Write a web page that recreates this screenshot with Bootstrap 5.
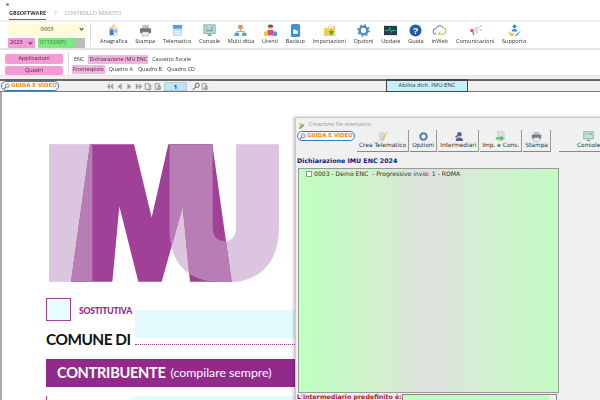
<!DOCTYPE html>
<html lang="it">
<head>
<meta charset="utf-8">
<title>GBsoftware</title>
<link href="https://cdn.jsdelivr.net/npm/bootstrap@5.3.0/dist/css/bootstrap.min.css" rel="stylesheet">
<style>
html,body{width:600px;height:400px;overflow:hidden;margin:0}
body{font-family:"Open Sans","Noto Sans",sans-serif;font-size:6.5px;line-height:1;color:#333;background:#fff}
.shell{height:400px;filter:blur(.3px)}
.titlebar{height:8px;padding-left:6px}
.titledot{width:3px;height:3px;background:#888;border-radius:50%}
.tabbar{height:14px;padding-left:9px;gap:8px;border-bottom:2px solid #f0f0f0;font-size:5.5px;color:#aaa}
.tabbar span{height:12px;display:flex;align-items:center}
.tab-on{color:#333;font-weight:700;border-bottom:1px solid #3a6ea5}
.ribbon{height:28px;border-bottom:2px solid #e4e4e4}
.selbox{width:90px;padding:2px 0 0 8px;gap:2px;flex:none}
.selpair{gap:3px}
.pick{display:flex;align-items:center;justify-content:center;height:12px;border-radius:1px;position:relative;font-size:5.6px}
.pick::after{content:"";position:absolute;right:3px;top:3px;width:3px;height:3px;border-right:1px solid #333;border-bottom:1px solid #333;transform:rotate(45deg)}
.pick-y{width:78px;background:#fdfbd8}
.pick-p{width:27px;background:#f39bd6;height:10px;justify-content:flex-start;padding-left:2px}
.pick-g{width:47px;background:#7fe87f;height:10px;color:#4a7a4a;justify-content:flex-start;padding-left:2px}
.pick-g::after{right:0;top:0;width:9px;height:10px;border:0;background:#bbb;transform:none}
.ribdiv{width:1px;height:24px;background:#ddd;margin:1px 0 0 0;flex:none}
.ribarea{flex:1;height:26px;padding:2px 0 0 9px;gap:7.7px}
.ribitem{display:flex;flex-direction:column;align-items:center;gap:2px;white-space:nowrap;font-size:5.6px}
.ribitem svg{width:13px;height:13px;display:block;opacity:.9}
.ribitem svg.wide-ic{width:17px}
.menurow{height:26px;border-bottom:1px solid #e6e6e6;padding-top:2px}
.menuleft{width:68px;padding:2px 5px 0 5px;gap:2px;flex:none}
.pinkbtn{background:#f39bd6;border:0;border-radius:2px;height:9.5px;font-size:5.6px;line-height:9px;padding:0;color:#333;width:58px}
.menuright{flex:1;border-left:1px solid #ddd;padding:3px 0 0 3px;gap:1px}
.menuline{gap:3px;height:9px;align-items:center}
.menuline span{padding:0 1px;height:9px;line-height:9px;font-size:5.4px}
.menuline .hot{background:#f7b1e0}
.menuindent{padding-left:1px}
.gapbar{height:3px;background:#eee}
.doctools{height:13px;background:#f0f0f0;border-top:2px solid #666;border-bottom:1px solid #777}
.guide{display:flex;align-items:center;gap:1px;border:1px solid #2d7fc1;border-radius:6px;background:#fff;color:#ee8a13;font-family:"DejaVu Sans",sans-serif;font-weight:700;font-size:5.4px;height:10px;width:58px;padding-left:1px;white-space:nowrap;flex:none}
.guide svg{width:7px;height:7px;flex:none}
.doctools .guide{margin:0 0 0 1px}
.navset{margin-left:47px;width:280px;height:10px;gap:1.500px;flex:none}
.navset svg{width:8px;height:9px;display:block}
.pagebox{width:23px;height:9px;background:#bfe3f7;color:#113a9c;border:1px solid #bcd;font-size:6px;font-weight:700;text-align:center;line-height:8px;margin:0 3px 0 1px}
.enablebtn{margin-top:-2px;width:82px;height:13px;background:#c8f0fc;border:1px solid #444;border-top-width:2px;font-size:5.8px;line-height:9px;text-align:center;color:#333;flex:none}
.stage{position:relative;flex:1;border-left:2px solid #aaa;background:#fff;overflow:hidden}
.sheet{width:293px;padding-left:44px}
.logo{display:block;width:230px;height:138px;margin:52px 0 16px 3px}
.headrow{height:61px}
.headleft{width:89px;flex:none}
.tick{width:25px;height:23px;border:1px solid #a3449b;background:#e6fdfd;flex:none}
.subst{color:#922a8c;font-family:Lato,sans-serif;font-weight:900;font-size:8.6px;margin:9px 0 0 8px;letter-spacing:-.2px;white-space:nowrap}
.comune{font-family:Lato,sans-serif;font-weight:700;font-size:15.4px;color:#111;margin-top:11px;white-space:nowrap;letter-spacing:-.5px}
.headright{flex:1;padding-top:12px}
.fieldbg{height:28px;background:#e4fbfc;margin-bottom:6px}
.fielddots{border-bottom:1px dotted #9a3b95}
.sectbar{height:28px;background:#922a8c;color:#fff;padding-left:11px;font-family:Lato,sans-serif;white-space:nowrap}
.sectbar b{font-size:14.6px;font-weight:700;letter-spacing:-.3px}
.sectbar em{font-style:normal;font-size:12.3px;margin-left:5px}
.sectbody{height:20px;border-left:1px solid #a3449b}
.sectfill{height:8px;margin:9px 0 0 85px;background:#e4fbfc}
.telewin{position:absolute;left:293px;top:25px;width:310px;height:290px;background:#f0f0f0;border:1px solid #ccc;box-shadow:-1px 0 3px rgba(0,0,0,.3);font-family:"DejaVu Sans",sans-serif}
.wintitle{height:12px;padding:2px 0 0 2px;gap:4px;color:#999;font-family:"Open Sans",sans-serif;font-size:5.4px}
.wintitle svg{width:7px;height:7px}
.wintools{height:22px;padding-left:1px;gap:1px}
.telewin .guide{margin:1px 1px 0 0}
.wtool{height:22px;padding:0 2px 2px;border:0;border-right:1px solid #999;border-bottom:1px solid #888;display:flex;flex-direction:column;align-items:center;justify-content:flex-end;gap:1px;font-size:5.9px;white-space:nowrap;color:#333;background:#f0f0f0;border-radius:0}
.wtool svg{width:11px;height:11px;opacity:.85}
.wtool-far{margin-left:7px;padding:0 18px 2px;border-right:0}
.dichead{color:#14147a;font-weight:700;font-size:6.3px;padding:6px 0 0 1px;height:16px}
.greenlist{margin-left:2px;width:261px;height:225px;border:1px solid #9a9a9a;padding:0 0 0 7px;background:linear-gradient(90deg,#bfffbf 0%,#d2efcf 32%,#e0e0e0 50%,#d6ecd4 66%,#c4fbc4 100%);font-size:6.1px;color:#333}
.chk{width:6px;height:6px;border:1px solid #999;background:#fff;margin-right:2px;flex:none}
.greenrow{height:8px;margin-top:1px}
.intbar{margin-top:1px;height:10px;padding-left:1px}
.intlabel{color:#b01818;font-weight:700;font-size:6.3px;width:105px;white-space:nowrap;flex:none}
.intsel{width:155px;height:10px;background:#bfffbf;border:1px solid #888;position:relative}
.intsel::after{content:"";position:absolute;right:0;top:0;width:7px;height:9px;background:#eee}
</style>
</head>
<body>
<svg width="0" height="0" class="position-absolute">
<defs>
<symbol id="ic-mag" viewBox="0 0 10 10"><circle cx="6" cy="4" r="3" fill="#cfe7f7" stroke="#5a7fa8"/><path d="M4 6 1 9" stroke="#d94a3a" stroke-width="1.6"/></symbol>
<symbol id="ic-print" viewBox="0 0 14 14"><rect x="3.5" y="1" width="7" height="4" fill="#b5bcc2"/><rect x="1" y="4.5" width="12" height="5.5" rx="1" fill="#5c6870"/><rect x="3.5" y="8.5" width="7" height="4.5" fill="#e8edf0" stroke="#7d8890" stroke-width=".5"/></symbol>
</defs>
</svg>
<div class="shell d-flex flex-column">
  <div class="titlebar d-flex align-items-center"><span class="titledot"></span></div>
  <div class="tabbar d-flex"><span class="tab-on">GBSOFTWARE</span><span>?</span><span>CONTROLLO REMOTO</span></div>

  <div class="ribbon d-flex">
    <div class="selbox d-flex flex-column">
      <div class="pick pick-y">0003</div>
      <div class="selpair d-flex"><div class="pick pick-p">2023</div><div class="pick pick-g">011329(P)</div></div>
    </div>
    <div class="ribdiv"></div>
    <div class="ribarea d-flex">
      <div class="ribitem"><svg viewBox="0 0 14 14"><rect x="2" y="3" width="10" height="10" fill="#dce9f7"/><path d="M7 0l2 3H5z" fill="#f0b83a"/><rect x="3" y="6" width="4" height="6" fill="#2a6fc0"/><circle cx="5" cy="5.500" r="1.500" fill="#e0843a"/><rect x="8" y="6" width="3" height="1" fill="#3f86d0"/><rect x="8" y="8" width="3" height="1" fill="#e04a4a"/></svg>Anagrafica</div>
      <div class="ribitem"><svg><use href="#ic-print"/></svg>Stampa</div>
      <div class="ribitem"><svg viewBox="0 0 14 14"><path d="M2 1h8l2 2v10H2z" fill="#bcdcf5"/><rect x="2" y="1" width="10" height="4" fill="#3f98e0"/><path d="M4 8h6M4 10h6" stroke="#fff"/></svg>Telematico</div>
      <div class="ribitem"><svg viewBox="0 0 14 14"><rect x="1" y="1" width="12" height="9" fill="#bfe0dc" stroke="#5a9aa0"/><rect x="3" y="3" width="3" height="2" fill="#e0a04a"/><rect x="8" y="3" width="3" height="2" fill="#5ab36a"/><rect x="3" y="6" width="8" height="2" fill="#5a9fd0"/><path d="M5 12h4" stroke="#5a9aa0" stroke-width="2"/></svg>Console</div>
      <div class="ribitem"><svg viewBox="0 0 14 14"><path d="M7 5v3M3 10V8h8v2" stroke="#7a9ab8" fill="none"/><rect x="4.500" y="1" width="5" height="4.500" rx="1" fill="#ea8a2e"/><rect x="0.500" y="9.500" width="5" height="3.500" rx="1" fill="#3d8fd8"/><rect x="8.500" y="9.500" width="5" height="3.500" rx="1" fill="#4fb36a"/></svg>Multi ditta</div>
      <div class="ribitem"><svg viewBox="0 0 14 14"><circle cx="7" cy="3.500" r="2.500" fill="#f2b28a"/><path d="M7 .5a3 3 0 0 1 3 3H4a3 3 0 0 1 3-3z" fill="#6a3a2a"/><rect x="3.500" y="6.500" width="7" height="6" rx="1" fill="#d9416f"/><rect x="0" y="8" width="4" height="5" rx="1" fill="#f0b83a"/><rect x="10" y="8" width="4" height="5" rx="1" fill="#4a86d8"/></svg>Utenti</div>
      <div class="ribitem"><svg viewBox="0 0 14 14"><rect x="2" y="0" width="10" height="14" rx="2" fill="#2f84c6"/><path d="M4.500 6h2l1 1h2v3.500h-5z" fill="#fff"/></svg>Backup</div>
      <div class="ribitem"><svg viewBox="0 0 14 14"><path d="M1 4h4l1-2h7v11H1z" fill="#f4cb3c"/><rect x="6" y="0" width="5" height="5" fill="#eee"/><path d="M9 5v4M6.500 8 9 12l2.500-4z" fill="#3aa83a" stroke="#3aa83a"/></svg>Importazioni</div>
      <div class="ribitem"><svg viewBox="0 0 14 14"><circle cx="7" cy="7" r="4.200" fill="none" stroke="#3a7dbc" stroke-width="2.600"/><circle cx="7" cy="7" r="6" fill="none" stroke="#3a7dbc" stroke-width="1.600" stroke-dasharray="2 2.700"/></svg>Opzioni</div>
      <div class="ribitem"><svg viewBox="0 0 14 14"><rect y="2" width="14" height="10" fill="#0e2a3a"/><path d="M1 7h4l1-3 2 5 1-2h4" stroke="#35d07a" fill="none" stroke-width=".8"/></svg>Update</div>
      <div class="ribitem"><svg viewBox="0 0 14 14"><circle cx="7" cy="7" r="6.500" fill="#0f4c94"/><text x="7" y="10.500" font-size="10" font-weight="700" text-anchor="middle" fill="#fff" font-family="Liberation Sans">?</text></svg>Guida</div>
      <div class="ribitem"><svg class="wide-ic" viewBox="0 0 14 14"><path d="M3.500 11a3 3 0 0 1-.5-6 4.500 4.500 0 0 1 8-1" fill="none" stroke="#4a8fd0" stroke-width="1.100"/><path d="M11 4a3.600 3.600 0 0 1 0 7H6l2-3" fill="none" stroke="#f0a040" stroke-width="1.100"/></svg>inWeb</div>
      <div class="ribitem"><svg viewBox="0 0 14 14"><path d="M3 6l7-4v9L3 8z" fill="#d8dde0"/><rect x="1.500" y="5.500" width="3" height="3" fill="#d94040"/><path d="M4 8.500 5.500 12" stroke="#d94040" stroke-width="1.300"/><path d="M11 4l2-2M11.500 6.500h2" stroke="#e06a50"/></svg>Comunicazioni</div>
      <div class="ribitem"><svg viewBox="0 0 14 14"><circle cx="7" cy="2.500" r="2" fill="#2f7fd8"/><path d="M4 8a3 3 0 0 1 6 0z" fill="#2f7fd8"/><path d="M0 8l4 2h3l-2 3H3z" fill="#f0b040"/><path d="M14 7l-4 3-3 3h3z" fill="#49b0e8"/></svg>Supporto</div>
    </div>
  </div>

  <div class="menurow d-flex">
    <div class="menuleft d-flex flex-column">
      <button type="button" class="btn pinkbtn">Applicazioni</button>
      <button type="button" class="btn pinkbtn">Quadri</button>
    </div>
    <div class="menuright d-flex flex-column">
      <div class="menuline menuindent d-flex"><span>ENC</span><span class="hot">Dichiarazione IMU ENC</span><span>Cassetto fiscale</span></div>
      <div class="menuline d-flex"><span class="hot">Frontespizio</span><span>Quadro A</span><span>Quadro B</span><span>Quadro CD</span></div>
    </div>
  </div>
  <div class="gapbar"></div>

  <div class="doctools d-flex">
    <div class="guide"><svg><use href="#ic-mag"/></svg>GUIDA E VIDEO</div>
    <div class="navset d-flex align-items-center">
      <svg viewBox="0 0 10 10"><path d="M5 1 1 5l4 4zM9 1 5 5l4 4z" fill="#9aa2a8"/></svg>
      <svg viewBox="0 0 10 10"><path d="M7 1 2 5l5 4z" fill="#9aa2a8"/></svg>
      <svg viewBox="0 0 10 10"><path d="M3 1l5 4-5 4z" fill="#9aa2a8"/></svg>
      <svg viewBox="0 0 10 10"><path d="M1 1l4 4-4 4zM5 1l4 4-4 4z" fill="#9aa2a8"/></svg>
      <svg viewBox="0 0 10 10"><path d="M1.500 1.500h5v7h-5z" fill="#eee" stroke="#888"/><path d="M6.500 3h2v6h-5" fill="none" stroke="#888"/></svg>
      <svg viewBox="0 0 10 10"><path d="M1.500 1.500h5v7h-5z" fill="#eee" stroke="#888"/><circle cx="6.500" cy="6.500" r="2" fill="none" stroke="#777"/></svg>
      <div class="pagebox">1</div>
      <svg viewBox="0 0 10 10"><circle cx="6.500" cy="3.500" r="2.500" fill="#fff" stroke="#333"/><path d="M4.500 5.500 1 9" stroke="#a0702a" stroke-width="1.500"/></svg>
      <svg viewBox="0 0 10 10"><path d="M1.500 1.500h5v7h-5z" fill="#eee" stroke="#888"/><circle cx="6.500" cy="6.500" r="2" fill="none" stroke="#777"/></svg>
    </div>
    <div class="enablebtn">Abilita dich. IMU-ENC</div>
  </div>

  <div class="stage">
    <div class="sheet">
      <svg class="logo" viewBox="57 42 690 413" aria-label="IMU">
        <defs>
          <path id="shape-m" d="M180 42H312L365 262 415 42H547L605 455H480L458 230 395 455H325L268 228 247 455H123Z"/>
          <path id="shape-u" d="M418 42H548V290Q548 333 585 333 618 333 618 290V42H747V290C747 400 690 457 585 457 470 457 418 400 418 290Z"/>
          <clipPath id="clip-i"><rect x="57" y="42" width="130" height="413"/></clipPath>
          <clipPath id="clip-u"><use href="#shape-u"/></clipPath>
        </defs>
        <rect x="57" y="42" width="130" height="413" fill="#dcc5df"/>
        <use href="#shape-u" fill="#dcc5df"/>
        <use href="#shape-m" fill="#a04097"/>
        <use href="#shape-m" fill="#b87db5" clip-path="url(#clip-i)"/>
        <use href="#shape-m" fill="#b87db5" clip-path="url(#clip-u)"/>
      </svg>
      <div class="headrow d-flex">
        <div class="headleft">
          <div class="d-flex"><div class="tick"></div><div class="subst">SOSTITUTIVA</div></div>
          <div class="comune">COMUNE DI</div>
        </div>
        <div class="headright"><div class="fieldbg"></div><div class="fielddots"></div></div>
      </div>
      <div class="sectbar d-flex align-items-center"><b>CONTRIBUENTE</b><em>(compilare sempre)</em></div>
      <div class="sectbody"><div class="sectfill"></div></div>
    </div>

    <div class="telewin">
      <div class="wintitle d-flex align-items-center">
        <svg viewBox="0 0 10 10"><path d="M1 9 7 3l2 2-6 5z" fill="#888"/><path d="M2 2h4v3H2z" fill="#e0c040"/></svg>Creazione file telematico
      </div>
      <div class="wintools d-flex">
        <div class="guide"><svg><use href="#ic-mag"/></svg>GUIDA E VIDEO</div>
        <button type="button" class="wtool"><svg viewBox="0 0 12 12"><rect x="2" y="1" width="6" height="10" fill="#d5d5d5"/><path d="M5 9l5-8 1 1-4 8z" fill="#e8c040"/></svg>Crea Telematico</button>
        <button type="button" class="wtool"><svg viewBox="0 0 12 12"><circle cx="6" cy="6" r="3.500" fill="none" stroke="#2d6cb0" stroke-width="2.200"/></svg>Opzioni</button>
        <button type="button" class="wtool"><svg viewBox="0 0 12 12"><circle cx="7" cy="3.500" r="2.500" fill="#2a4a8a"/><path d="M3 11a4 4 0 0 1 8 0z" fill="#2a4a8a"/><circle cx="4" cy="6" r="1.500" fill="#c04040"/></svg>Intermediari</button>
        <button type="button" class="wtool"><svg viewBox="0 0 12 12"><path d="M3 0h5l2 2v8H3z" fill="#ddd" stroke="#aaa" stroke-width=".5"/><path d="M1 7h5V5l4 3-4 3V9H1z" fill="#2fc03a"/></svg>Imp. e Cons.</button>
        <button type="button" class="wtool"><svg><use href="#ic-print"/></svg>Stampa</button>
        <button type="button" class="wtool wtool-far"><svg viewBox="0 0 14 14"><rect x="1" y="1" width="12" height="9" fill="#bfe0dc" stroke="#5a9aa0"/><rect x="3" y="3" width="3" height="2" fill="#e0a04a"/><rect x="8" y="3" width="3" height="2" fill="#5ab36a"/><path d="M5 12h4" stroke="#5a9aa0" stroke-width="2"/></svg>Console</button>
      </div>
      <div class="dichead">Dichiarazione IMU ENC 2024</div>
      <div class="greenlist">
        <div class="greenrow d-flex align-items-center"><span class="chk"></span>0003 - Demo ENC &nbsp;- Progressivo invio: 1 - ROMA</div>
      </div>
      <div class="intbar d-flex">
        <div class="intlabel">L'intermediario predefinito è:</div>
        <div class="intsel"></div>
      </div>
    </div>
  </div>
</div>
<script src="https://cdn.jsdelivr.net/npm/bootstrap@5.3.0/dist/js/bootstrap.bundle.min.js"></script>
</body>
</html>
